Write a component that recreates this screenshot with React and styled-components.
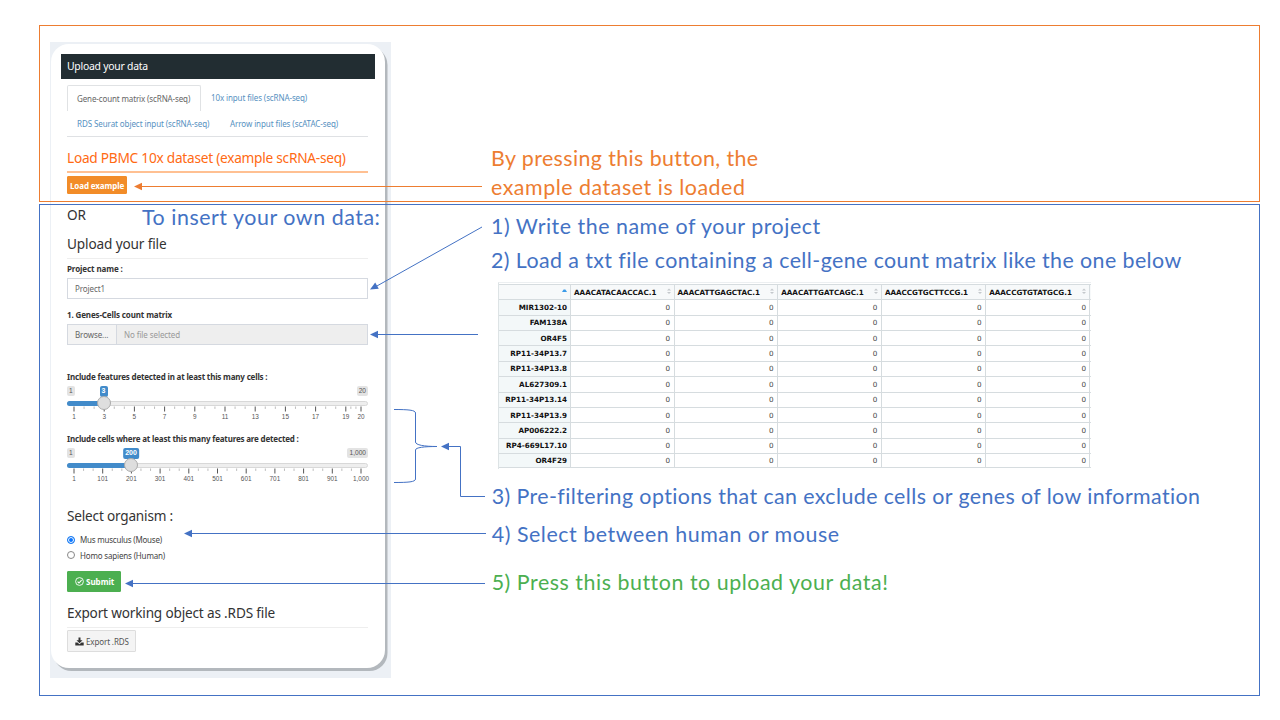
import React from "react";
import styled, { createGlobalStyle } from "styled-components";

const Global = createGlobalStyle`
  * { box-sizing: border-box; }
  body { margin: 0; background: #fff; }
`;
const ui = `"Noto Sans", "Open Sans", sans-serif`;
const BLUE = "#4472c4";
const ORANGE = "#ed7d31";
const GREEN = "#4caf50";

const Slide = styled.main`
  position: relative;
  width: 1280px;
  height: 720px;
  overflow: hidden;
  padding: 25px 20px 24px 39px;
  display: grid;
  grid-template-columns: 452px 1fr;
  grid-template-rows: 177px 492px;
  row-gap: 2px;
  background: #fff;
  font-family: ${ui};
`;
const Frame = styled.div`
  grid-column: 1 / -1;
  grid-row: ${(p) => p.$row};
  border: 1px solid ${(p) => p.$color};
  z-index: 1;
  pointer-events: none;
`;
const Backdrop = styled.section`
  grid-column: 1;
  grid-row: 1 / 3;
  margin: 17px 0 0 11px;
  width: 341px;
  height: 636px;
  padding: 2px 6px 10px 1px;
  background: #ecf0f5;
`;
const Card = styled.div`
  height: 624px;
  padding: 10px;
  background: #fff;
  border-radius: 18px;
  box-shadow: 2.5px 3px 0 #b3b8bd;
`;
const CardTitle = styled.div`
  height: 25px;
  padding-left: 6px;
  background: #222d32;
  color: #fff;
  font-size: 10.4px;
  line-height: 24px;
  letter-spacing: -0.24px;
`;
const Body = styled.div`
  padding: 6px 7px 0 6px;
  display: flex;
  flex-direction: column;
  align-items: stretch;
`;
const TabRow = styled.div`
  display: flex;
  height: 26px;
  border-bottom: ${(p) => (p.$last ? "1px solid #dfe1e4" : "0")};
`;
const Tab = styled.div`
  flex: none;
  width: ${(p) => p.$w}px;
  padding-left: ${(p) => (p.$active ? 9 : 10)}px;
  border: ${(p) => (p.$active ? "1px solid #e0e2e4" : "0")};
  border-bottom: 0;
  border-radius: 2px 2px 0 0;
  color: ${(p) => (p.$active ? "#666" : "#5691bf")};
  font-size: 8px;
  line-height: ${(p) => (p.$active ? 25 : 26)}px;
  letter-spacing: ${(p) => p.$ls || 0}px;
  white-space: nowrap;
`;
const Heading = styled.h2`
  margin: ${(p) => p.$mt}px 0 0;
  padding-bottom: ${(p) => p.$pb || 0}px;
  border-bottom: ${(p) => p.$rule || "0"};
  color: ${(p) => p.$color || "#333"};
  font-size: ${(p) => p.$size || 13.6}px;
  line-height: ${(p) => p.$lh || 20}px;
  font-weight: 400;
  letter-spacing: ${(p) => p.$ls || 0}px;
  white-space: nowrap;
`;
const Label = styled.label`
  margin-top: ${(p) => p.$mt}px;
  color: #333;
  font-size: 8px;
  font-weight: 700;
  line-height: 11px;
  letter-spacing: ${(p) => p.$ls || 0}px;
  white-space: nowrap;
`;
const Button = styled.button`
  align-self: flex-start;
  display: flex;
  align-items: center;
  gap: 2px;
  margin: ${(p) => p.$mt}px 0 0;
  padding: 0 0 0 ${(p) => p.$pl}px;
  width: ${(p) => p.$w}px;
  height: ${(p) => p.$h}px;
  border: 1px solid ${(p) => p.$line};
  border-radius: 1px;
  background: ${(p) => p.$bg};
  color: ${(p) => p.$fg};
  font: ${(p) => p.$weight || 400} 8px ${ui};
  letter-spacing: ${(p) => p.$ls || 0}px;
  white-space: nowrap;
`;
const Field = styled.div`
  margin-top: 4px;
  display: flex;
  height: 21px;
  border: 1px solid #d5d9e0;
  background: ${(p) => p.$bg || "#fff"};
  font-size: 8px;
  line-height: 19px;
`;
const FieldText = styled.span`
  padding-left: 7px;
  width: ${(p) => p.$w || "auto"};
  background: ${(p) => p.$bg || "transparent"};
  border-right: ${(p) => (p.$bg ? "1px solid #d5d9e0" : "0")};
  color: ${(p) => p.$color || "#666"};
  letter-spacing: -0.09px;
`;
const SliderBox = styled.div`
  height: 40px;
  padding-top: 4px;
`;
const Badges = styled.div`
  position: relative;
  display: flex;
  justify-content: space-between;
  height: 15px;
  font: 6.6px/9px "Liberation Sans", Arial, sans-serif;
`;
const Badge = styled.span`
  height: 10px;
  padding: 0 2px;
  border-radius: 2px;
  background: #e3e3e3;
  color: #555;
`;
const ValueBadge = styled(Badge)`
  position: absolute;
  top: 0;
  left: ${(p) => p.$x}px;
  min-width: 8px;
  text-align: center;
  transform: translateX(-50%);
  background: #428bca;
  color: #fff;
  height: 11px;
  line-height: 10px;
  font-size: 7px;
  font-weight: 700;
`;
const Track = styled.div`
  position: relative;
  height: 5px;
  border: 1px solid #d8d8d8;
  border-radius: 3px;
  background: #eee;
`;
const Fill = styled.div`
  width: ${(p) => p.$w}px;
  height: 5px;
  margin: -1px;
  border-radius: 3px 0 0 3px;
  background: #428bca;
`;
const Thumb = styled.div`
  position: absolute;
  left: ${(p) => p.$x - 8}px;
  top: -6px;
  width: 14px;
  height: 14px;
  border: 1px solid #ababab;
  border-radius: 50%;
  background: #dedede;
`;
const Scale = styled.svg`
  display: block;
  overflow: visible;
  font: 6.4px "Liberation Sans", Arial, sans-serif;
`;
const RadioGroup = styled.div`
  margin-top: 6px;
`;
const Radio = styled.div`
  display: flex;
  align-items: center;
  gap: 5px;
  height: 15.5px;
  color: #444;
  font-size: 8px;
  letter-spacing: ${(p) => p.$ls || 0}px;
`;
const Dot = styled.i`
  width: 8px;
  height: 8px;
  border: 1px solid ${(p) => (p.$on ? "#1a7cf0" : "#888")};
  border-radius: 50%;
  background: ${(p) => (p.$on ? "#0a75ff" : "#fff")};
  box-shadow: inset 0 0 0 1px #fff;
`;
const Notes = styled.section`
  grid-column: 2;
  grid-row: ${(p) => p.$row};
  display: flex;
  flex-direction: column;
  padding-top: ${(p) => p.$pt}px;
  font-family: Lato, Calibri, sans-serif;
  color: ${(p) => p.$color};
`;
const Note = styled.p`
  margin: ${(p) => p.$mt || 0}px 0 0;
  padding-left: ${(p) => p.$pl || 0}px;
  font-size: 21.4px;
  line-height: 29px;
  color: ${(p) => p.$color || "inherit"};
  letter-spacing: ${(p) => p.$ls || 0}px;
  white-space: nowrap;
`;
const FloatingNote = styled(Note)`
  position: absolute;
  left: 142px;
  top: 203px;
  z-index: 2;
  color: ${BLUE};
  font-family: Lato, Calibri, sans-serif;
`;
const Table = styled.div`
  margin: 7px 0 0 7px;
  width: 593px;
  height: 187px;
  padding-top: 1px;
  border-left: 1px solid #dde3e5;
  border-top: 1px solid #eceff1;
  font-family: "DejaVu Sans", Verdana, sans-serif;
  font-size: 7.2px;
`;
const Row = styled.div`
  display: grid;
  grid-template-columns: 72px 103.5px 103.7px 103.7px 104.3px 104.3px;
  height: 15.37px;
  border-top: 1px solid #d6dcdf;
  background: linear-gradient(90deg, ${(p) => (p.$head ? "#f7f9fa 592px" : "#f3f8f9 72px")}, #fff 0);
  &:last-child { border-bottom: 1px solid #d6dcdf; }
`;
const Cell = styled.div`
  display: flex;
  align-items: center;
  justify-content: ${(p) => (p.$end ? "flex-end" : "space-between")};
  padding: 0 ${(p) => (p.$bold ? 3 : 3.5)}px 0 3px;
  border-right: 1px solid #d6dcdf;
  color: ${(p) => (p.$bold ? "#111" : "#444")};
  font-weight: ${(p) => (p.$bold ? 700 : 400)};
  white-space: nowrap;
`;
const Overlay = styled.svg`
  position: absolute;
  inset: 0;
  z-index: 2;
  pointer-events: none;
`;

const COLS = ["AAACATACAACCAC.1", "AAACATTGAGCTAC.1", "AAACATTGATCAGC.1", "AAACCGTGCTTCCG.1", "AAACCGTGTATGCG.1"];
const GENES = ["MIR1302-10", "FAM138A", "OR4F5", "RP11-34P13.7", "RP11-34P13.8", "AL627309.1", "RP11-34P13.14", "RP11-34P13.9", "AP006222.2", "RP4-669L17.10", "OR4F29"];

function SortIcon({ active }) {
  return active ? (
    <svg width="5" height="10"><path d="M0 5 L1.6 2.4H3.4 L5 5Z" fill="#3b9be8" /></svg>
  ) : (
    <svg width="4" height="10"><path d="M0 3.4 L2 1.4 L4 3.4Z M0 5 L2 7 L4 5Z" fill="#c4c8cb" /></svg>
  );
}

function Slider({ min, max, value, x, ticks }) {
  return (
    <SliderBox>
      <Badges>
        <Badge>{min}</Badge>
        <ValueBadge $x={x}>{value}</ValueBadge>
        <Badge>{max}</Badge>
      </Badges>
      <Track>
        <Fill $w={x} />
        <Thumb $x={x} />
      </Track>
      <Scale width="301" height="16">
        {ticks.map(([pos, text], i) => {
          const next = ticks[i + 1];
          const step = next ? (next[0] - pos) / 3 : 0;
          return (
            <g key={text}>
              <path d={`M${pos} 0.5v5`} stroke="#555" />
              {next && <path d={`M${pos + step} 0.5v2.4M${pos + 2 * step} 0.5v2.4`} stroke="#aaa" strokeWidth="0.8" />}
              <text x={pos} y="12.5" textAnchor="middle" fill="#555">{text}</text>
            </g>
          );
        })}
      </Scale>
    </SliderBox>
  );
}

const cellTicks = [...[1, 3, 5, 7, 9, 11, 13, 15, 17, 19].map((n, i) => [7 + i * 30.2, String(n)]), [294, "20"]];
const featureTicks = ["1", "101", "201", "301", "401", "501", "601", "701", "801", "901", "1,000"].map((t, i) => [7 + i * 28.7, t]);

function Head({ x, y, color = BLUE, deg = 0 }) {
  return <path d="M0 0L8 -3.7V3.7Z" fill={color} transform={`translate(${x} ${y}) rotate(${deg})`} />;
}

export default function App() {
  return (
    <Slide>
      <Global />
      <Frame $row={1} $color={ORANGE} />
      <Frame $row={2} $color={BLUE} />
      <Backdrop>
        <Card>
          <CardTitle>Upload your data</CardTitle>
          <Body>
            <TabRow>
              <Tab $w={134} $active $ls={-0.13}>Gene-count matrix (scRNA-seq)</Tab>
              <Tab $w={120} $ls={-0.11}>10x input files (scRNA-seq)</Tab>
            </TabRow>
            <TabRow $last>
              <Tab $w={153} $ls={-0.08}>RDS Seurat object input (scRNA-seq)</Tab>
              <Tab $w={130} $ls={-0.08}>Arrow input files (scATAC-seq)</Tab>
            </TabRow>
            <Heading $mt={8} $size={13.7} $lh={26} $ls={-0.26} $color="#ff6a13" $rule="2px solid #ffc092">
              Load PBMC 10x dataset (example scRNA-seq)
            </Heading>
            <Button $mt={3} $w={60} $h={18} $pl={2} $ls={-0.11} $bg="#f28c28" $line="#f28c28" $fg="#fff" $weight={700}>Load example</Button>
            <Heading $mt={11}>OR</Heading>
            <Heading $mt={9} $pb={4} $ls={-0.13} $rule="1px solid #eee">Upload your file</Heading>
            <Label $mt={4} $ls={-0.1}>Project name :</Label>
            <Field><FieldText>Project1</FieldText></Field>
            <Label $mt={10} $ls={-0.13}>1. Genes-Cells count matrix</Label>
            <Field $bg="#eee">
              <FieldText $w="49px" $bg="#f4f4f4">Browse...</FieldText>
              <FieldText $color="#999">No file selected</FieldText>
            </Field>
            <Label $mt={26} $ls={-0.18}>Include features detected in at least this many cells :</Label>
            <Slider min="1" max="20" value="3" x={36.5} ticks={cellTicks} />
            <Label $mt={11} $ls={-0.18}>Include cells where at least this many features are detected :</Label>
            <Slider min="1" max="1,000" value="200" x={64} ticks={featureTicks} />
            <Heading $mt={21} $lh={21} $ls={-0.19}>Select organism :</Heading>
            <RadioGroup>
              <Radio $ls={-0.22}><Dot $on />Mus musculus (Mouse)</Radio>
              <Radio $ls={-0.17}><Dot />Homo sapiens (Human)</Radio>
            </RadioGroup>
            <Button $mt={8} $w={54} $h={20.5} $pl={7} $bg={GREEN} $line={GREEN} $fg="#fff" $weight={700}>
              <svg width="9" height="9" viewBox="0 0 9 9" fill="none" stroke="#fff"><circle cx="4.5" cy="4.5" r="3.9" strokeWidth="0.9" /><path d="M2.6 4.6L4 6L6.6 3.2" strokeWidth="1.1" /></svg>
              Submit
            </Button>
            <Heading $mt={11.5} $pb={4} $ls={-0.17} $rule="1px solid #eee">Export working object as .RDS file</Heading>
            <Button $mt={2} $w={69} $h={22} $pl={7} $ls={-0.12} $bg="#f4f4f4" $line="#ddd" $fg="#555">
              <svg width="9" height="9" viewBox="0 0 9 9" fill="#333"><path d="M3.5 0.5h2v2.7h2L4.5 6.3L1.5 3.2h2Z M0.3 5.6h2.2L4.5 7.2L6.5 5.6h2.2V8.4H0.3Z" /></svg>
              Export .RDS
            </Button>
          </Body>
        </Card>
      </Backdrop>
      <Notes $row={1} $pt={119} $color={ORANGE}>
        <Note $ls={0.4}>By pressing this button, the</Note>
        <Note $ls={0.53}>example dataset is loaded</Note>
      </Notes>
      <Notes $row={2} $pt={8} $color={BLUE}>
        <Note $ls={0.52}>1) Write the name of your project</Note>
        <Note $mt={5} $ls={0.41}>2) Load a txt file containing a cell-gene count matrix like the one below</Note>
        <Table>
          <Row $head>
            <Cell $end><SortIcon active /></Cell>
            {COLS.map((c) => <Cell key={c} $bold>{c}<SortIcon /></Cell>)}
          </Row>
          {GENES.map((g) => (
            <Row key={g}>
              <Cell $bold $end>{g}</Cell>
              {COLS.map((c) => <Cell key={c} $end>0</Cell>)}
            </Row>
          ))}
        </Table>
        <Note $mt={13} $pl={0.7} $ls={0.4}>3) Pre-filtering options that can exclude cells or genes of low information</Note>
        <Note $mt={9} $pl={0.7} $ls={0.55}>4) Select between human or mouse</Note>
        <Note $mt={19} $pl={0.7} $ls={0.53} $color={GREEN}>5) Press this button to upload your data!</Note>
      </Notes>
      <FloatingNote $ls={0.54}>To insert your own data:</FloatingNote>
      <Overlay width="1280" height="720" fill="none" stroke="none">
        <g stroke={BLUE}>
          <path d="M482 227L376 286.5M478 334.5H377M486 533.5H191M485 583.5H132M485 496.5H460.5V446.5H448" />
          <path d="M394 409.5C408 409.5 415.5 410 415.5 413V442C415.5 445 424 446.5 437 446.5C424 446.5 415.5 447.5 415.5 450V479C415.5 482 408 482.5 394 482.5" />
        </g>
        <path d="M482 186.5H141" stroke={ORANGE} />
        <Head x={134} y={186.5} color={ORANGE} />
        <Head x={370} y={289.5} deg={-29} />
        <Head x={370} y={334.5} />
        <Head x={441} y={446.5} />
        <Head x={184} y={533.5} />
        <Head x={125} y={583.5} />
      </Overlay>
    </Slide>
  );
}
